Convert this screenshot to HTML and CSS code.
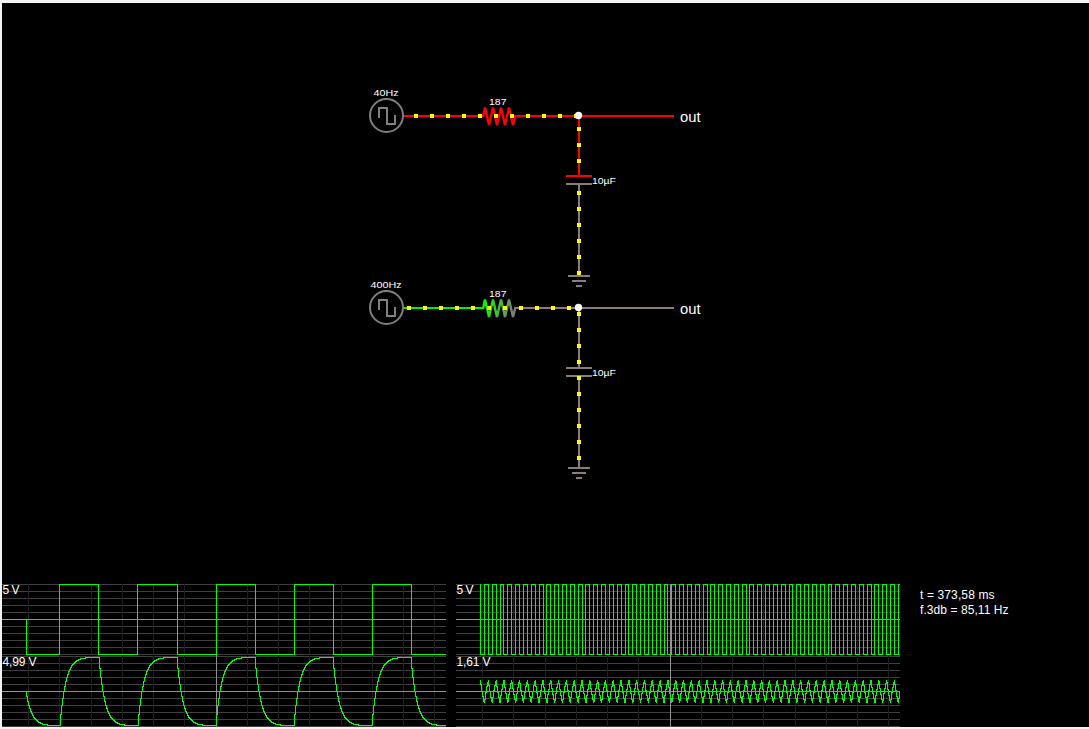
FILE: index.html
```html
<!DOCTYPE html>
<html lang="en">
<head>
<meta charset="utf-8">
<title>Circuit Simulator</title>
<link rel="stylesheet" href="styles.css">
</head>
<body>
<main class="simulator">
  <svg class="circuit" viewBox="2 3 1087 581" width="1087" height="581">
    <defs>
      <linearGradient id="drop" gradientUnits="userSpaceOnUse" x1="483" y1="0" x2="515" y2="0">
        <stop offset="0" stop-color="#00ff00"/>
        <stop offset="1" stop-color="#847a7a"/>
      </linearGradient>
      <g id="source">
        <circle cx="386.5" cy="115.5" r="16.5"/>
        <path class="crisp" d="M379 118V108H387V124H395V115"/>
      </g>
      <path id="zigzag" d="M483 117L485 107.5L489 125L493 107.5L497 125L501 107.5L505 125L509 107.5L513 125L515.5 115"/>
      <path id="ground" d="M568 276H590M572 281H586M576 286H582"/>
    </defs>

    <g class="wire crisp">
      <path class="hot" d="M404 116H483M515 116H674M579 116V176M566 176H592"/>
      <path class="idle" d="M566 184H592M579 184V276"/>
      <use class="idle" href="#ground"/>
      <path class="live" d="M404 308H483"/>
      <path class="idle" d="M515 308H674M579 308V368M566 368H592M566 376H592M579 376V468"/>
      <use class="idle" href="#ground" y="192"/>
    </g>
    <g class="wire">
      <use class="source" href="#source"/>
      <use class="source" href="#source" y="192"/>
      <use class="resistor hot" href="#zigzag"/>
      <use class="resistor fading" href="#zigzag" y="192"/>
    </g>
    <g id="charges" class="charges crisp"></g>
    <circle class="node" cx="578.5" cy="115.5" r="3.7"/>
    <circle class="node" cx="578.5" cy="307.5" r="3.7"/>

    <g class="label">
      <text x="373.5" y="96" textLength="25" lengthAdjust="spacingAndGlyphs">40Hz</text>
      <text x="489" y="105" textLength="17.5" lengthAdjust="spacingAndGlyphs">187</text>
      <text x="592" y="184" textLength="24" lengthAdjust="spacingAndGlyphs">10µF</text>
      <text x="370.5" y="288" textLength="31" lengthAdjust="spacingAndGlyphs">400Hz</text>
      <text x="489" y="297" textLength="17.5" lengthAdjust="spacingAndGlyphs">187</text>
      <text x="592" y="376" textLength="24" lengthAdjust="spacingAndGlyphs">10µF</text>
    </g>
    <g class="output">
      <text x="680" y="122" textLength="20.5" lengthAdjust="spacingAndGlyphs">out</text>
      <text x="680" y="314" textLength="20.5" lengthAdjust="spacingAndGlyphs">out</text>
    </g>
  </svg>

  <section class="scopes">
    <svg class="scope" id="scope-low" viewBox="2 584 444 143" width="444" height="143"></svg>
    <svg class="scope" id="scope-high" viewBox="456 584 444 143" width="444" height="143"></svg>
    <svg class="readout" viewBox="920 584 169 143" width="169" height="143">
      <text x="920" y="599" textLength="74.5">t = 373,58 ms</text>
      <text x="920" y="614" textLength="88.5">f.3db = 85,11 Hz</text>
    </svg>
  </section>
</main>
<script src="scope.js"></script>
</body>
</html>
```

FILE: styles.css
```css
body {
  margin: 0;
  background: #f4f4f4;
  font-family: "Liberation Sans", Arial, sans-serif;
  overflow: hidden;
}

.simulator {
  margin: 3px 0 0 2px;
  height: 724px;
  background: #000;
}

.circuit,
.scope,
.readout {
  display: block;
  flex: none;
}

.crisp,
.scope path {
  shape-rendering: crispEdges;
}

.wire {
  fill: none;
  stroke-width: 2;
}

.resistor { stroke-width: 2.4; stroke-linejoin: bevel; }
.hot { stroke: #ff0000; }
.live { stroke: #00f000; }
.idle { stroke: #8a7c7c; }
.source { stroke: #808080; }
.source circle { stroke-width: 2.3; }
.fading { stroke: url(#drop); }

.charges { fill: #ffff00; }
.node { fill: #fff; }

text { fill: #fff; }
.label { font-size: 9.7px; }
.output { font-size: 14px; }

.scopes {
  display: flex;
  gap: 10px;
}

.scope,
.readout {
  font-size: 12px;
}

.readout { margin-left: 10px; }
.grid-minor { fill: #404040; }
.grid-time { fill: #202020; }
.grid-major { fill: #909090; }
.trace { fill: #00ff00; }
```

FILE: scope.js
```js
const NS = "http://www.w3.org/2000/svg";

function add(parent, tag, attrs, text) {
  const el = document.createElementNS(NS, tag);
  for (const key in attrs) el.setAttribute(key, attrs[key]);
  if (text) el.textContent = text;
  parent.appendChild(el);
}

const box = (x, y, w, h) => `M${x} ${y}h${w}v${h}h${-w}z`;

// Moving charges, one every 16px along each conductor.
function charges(x, y, dx, dy, count) {
  const group = document.getElementById("charges");
  for (let i = 0; i < count; i++) {
    add(group, "rect", { x: x + dx * i, y: y + dy * i, width: 4, height: 4 });
  }
}
charges(414, 114, 16, 0, 11);
charges(577, 127, 0, 16, 3);
charges(577, 191, 0, 16, 6);
charges(407, 306, 16, 0, 11);
charges(577, 312, 0, 16, 10);

function grid(svg, left, times, major) {
  let minor = "", time = "";
  for (const top of [584, 656]) {
    for (let i = 0; i <= 10; i++) minor += box(left, top + 7 * i, 444, 1);
  }
  for (const x of times) time += box(x, 584, 1, 71) + box(x, 656, 1, 71);
  add(svg, "path", { class: "grid-minor", d: minor });
  add(svg, "path", { class: "grid-time", d: time });
  add(svg, "path", {
    class: "grid-major",
    d: box(left, 619, 444, 1) + box(left, 691, 444, 1) + box(major, 584, 1, 143)
  });
}

// Square wave: the first edge goes low, then the level alternates.
function square(left, right, edges) {
  let d = box(left, 619, edges[0] - left, 1);
  edges.forEach((x, i) => {
    const next = i + 1 < edges.length ? edges[i + 1] : right - 1;
    d += box(x, i ? 584 : edges.firstTop, 1, i ? 71 : 655 - edges.firstTop);
    d += box(x, i % 2 ? 584 : 654, next - x + 1, 1);
  });
  return d;
}

// Capacitor voltage, drawn as one vertical run for each pixel column.
function filtered(left, right, edges, start, peak, limit, tau) {
  let d = box(left, 691, Math.floor(edges[0]) - left, 1);
  let v = start;
  const row = level => Math.round(691 - Math.max(-peak, Math.min(peak, level)));
  edges.forEach((x, i) => {
    const end = i + 1 < edges.length ? edges[i + 1] : right;
    const target = i % 2 ? limit : -limit;
    const from = v;
    let previous = row(from);
    for (let px = Math.floor(x); px < end; px++) {
      v = target + (from - target) * Math.exp(-(Math.min(px + 1, end) - x) / tau);
      const y = row(v);
      const low = Math.min(y, previous), high = Math.max(y, previous);
      d += box(px, low, 1, high - low + 1);
      previous = y;
    }
  });
  return d;
}

const low = document.getElementById("scope-low");
grid(low, 2, [28, 59, 91, 122, 153, 184, 247, 278, 309, 341, 372, 403, 434], 216);
const lowEdges = [26, 59, 98, 137, 177, 216, 255, 294, 333, 372, 411];
lowEdges.firstTop = 619;
add(low, "path", { class: "trace", d: square(2, 446, lowEdges) });
add(low, "path", {
  class: "trace",
  d: filtered(2, 446, [26, 60, 99, 138, 177, 216, 255, 294, 333, 372, 411], 0, 34, 34.4, 5.84)
});
add(low, "text", { x: 2.5, y: 594, textLength: 17 }, "5 V");
add(low, "text", { x: 2.5, y: 666, textLength: 34 }, "4,99 V");

const high = document.getElementById("scope-high");
grid(high, 456, [482, 513, 545, 576, 607, 638, 701, 732, 763, 795, 826, 857, 888], 670);
const exact = [480.4];
for (let x = 484.45; x < 900; x += 3.905) exact.push(x);
const highEdges = exact.map(Math.floor);
highEdges.firstTop = 584;
add(high, "path", { class: "trace", d: square(456, 900, highEdges) });
add(high, "path", {
  class: "trace",
  d: filtered(456, 900, exact, 11, 11, 34.5, 5.84)
});
add(high, "text", { x: 456.5, y: 594, textLength: 17 }, "5 V");
add(high, "text", { x: 456.5, y: 666, textLength: 34 }, "1,61 V");
```
